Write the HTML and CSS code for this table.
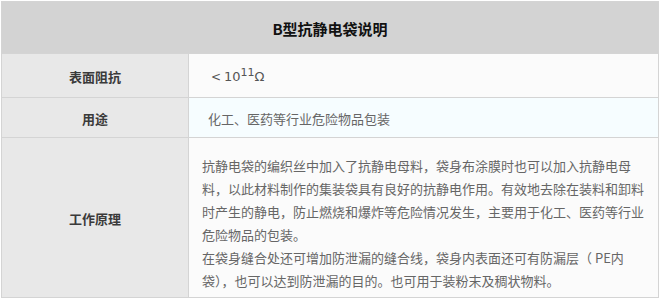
FILE: index.html
```html
<!DOCTYPE html>
<html lang="zh-CN">
<head>
<meta charset="utf-8">
<title>B型抗静电袋说明</title>
<link rel="stylesheet" href="styles.css">
</head>
<body>
<div class="spec">
  <div class="spec-title">B型抗静电袋说明</div>
  <div class="spec-label row-1">表面阻抗</div>
  <div class="spec-value row-1 value-ohm">&lt;<span class="num">10<sup>11</sup>Ω</span></div>
  <div class="spec-label row-2">用途</div>
  <div class="spec-value row-2 value-use">化工、医药等行业危险物品包装</div>
  <div class="spec-label row-3">工作原理</div>
  <div class="spec-value row-3 value-text">抗静电袋的编织丝中加入了抗静电母料，袋身布涂膜时也可以加入抗静电母<br>料，以此材料制作的集装袋具有良好的抗静电作用。有效地去除在装料和卸料<br>时产生的静电，防止燃烧和爆炸等危险情况发生，主要用于化工、医药等行业<br>危险物品的包装。<br>在袋身缝合处还可增加防泄漏的缝合线，袋身内表面还可有防漏层（ PE内<br>袋），也可以达到防泄漏的目的。也可用于装粉末及稠状物料。</div>
</div>
</body>
</html>
```
FILE: styles.css
```css
html, body {
  margin: 0;
  padding: 0;
  background: #ffffff;
}

body {
  padding: 1px;
  font-family: "Noto Sans CJK SC", "Noto Sans", sans-serif;
}

.spec {
  display: grid;
  grid-template-columns: 187px 470px;
  grid-template-rows: 52px 44px 40px 160px;
  border-top: 1px solid #d4d4d4;
  border-left: 1px solid #d4d4d4;
  width: 657px;
}

.spec > div {
  box-sizing: border-box;
  border-right: 1px solid #d4d4d4;
  border-bottom: 1px solid #d4d4d4;
  display: flex;
  align-items: center;
}

.spec-title {
  grid-column: 1 / 3;
  justify-content: center;
  background: #d3d3d3;
  color: #111111;
  font-size: 15px;
  font-weight: bold;
  padding-top: 2px;
}

.spec-label {
  justify-content: center;
  background: #e8e8e8;
  color: #3a3a3a;
  font-size: 13px;
  font-weight: bold;
  padding-top: 2px;
}

.spec-value {
  background: #fbfbfb;
  color: #666666;
  font-size: 13px;
}

.value-ohm {
  padding-left: 22px;
  padding-top: 2px;
  font-family: "DejaVu Sans", sans-serif;
  font-size: 12px;
  color: #555555;
}

.value-ohm .num {
  margin-left: 3px;
  font-size: 13px;
}

.value-ohm sup {
  font-size: 11px;
  line-height: 0;
  vertical-align: 5px;
}

.value-use {
  background: #f6fdff;
  padding-left: 19px;
  padding-top: 2px;
}

.value-text {
  align-items: flex-start;
  padding: 10px 0 0 13px;
  line-height: 23px;
  white-space: nowrap;
}
```
